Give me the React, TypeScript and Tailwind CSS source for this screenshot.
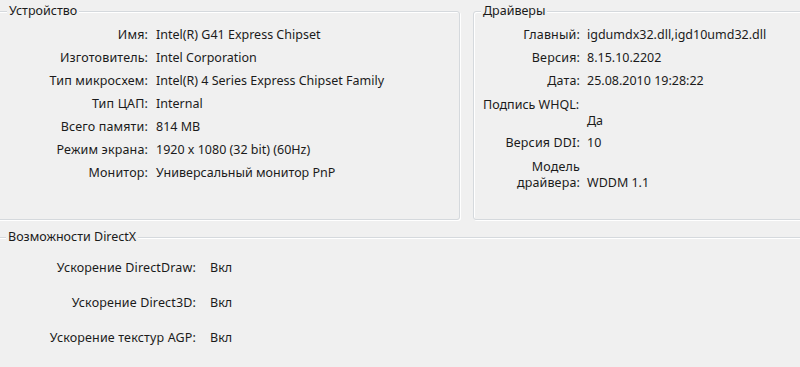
import React from 'react';

const deviceRows = [
  { label: 'Имя:', value: 'Intel(R) G41 Express Chipset' },
  { label: 'Изготовитель:', value: 'Intel Corporation' },
  { label: 'Тип микросхем:', value: 'Intel(R) 4 Series Express Chipset Family' },
  { label: 'Тип ЦАП:', value: 'Internal' },
  { label: 'Всего памяти:', value: '814 MB' },
  { label: 'Режим экрана:', value: '1920 x 1080 (32 bit) (60Hz)' },
  { label: 'Монитор:', value: 'Универсальный монитор PnP' },
];

const driverRows = [
  { label: 'Главный:', value: 'igdumdx32.dll,igd10umd32.dll' },
  { label: 'Версия:', value: '8.15.10.2202' },
  { label: 'Дата:', value: '25.08.2010 19:28:22' },
];

const dxRows = [
  { label: 'Ускорение DirectDraw:', value: 'Вкл' },
  { label: 'Ускорение Direct3D:', value: 'Вкл' },
  { label: 'Ускорение текстур AGP:', value: 'Вкл' },
];

const groupBox =
  'min-w-0 p-0 rounded-[3px] border border-[#d5d9dd] shadow-[inset_1px_1px_0_#ffffff,1px_1px_0_#ffffff]';
const legendCls = 'px-[2px] leading-[14px] bg-[#f0f0f0]';

export default function App() {
  return (
    <div
      className="w-[800px] h-[367px] overflow-hidden bg-[#f0f0f0] text-[12.5px] text-[#1b1b1b]"
      style={{ fontFamily: '"Noto Sans", "Open Sans", sans-serif' }}
    >
      <div className="flex gap-[13px]">
        {/* Устройство */}
        <fieldset className={`${groupBox} -ml-[4px] mt-[4px] w-[464px] h-[216px] shrink-0`}>
          <legend className={`${legendCls} ml-[10px]`}>Устройство</legend>
          <div className="grid grid-cols-[151px_1fr] gap-x-[8px] pt-[6px]">
            {deviceRows.map((r) => (
              <React.Fragment key={r.label}>
                <div className="h-[23px] flex items-center justify-end whitespace-nowrap tracking-[0.15px]">{r.label}</div>
                <div className="h-[23px] flex items-center whitespace-nowrap">{r.value}</div>
              </React.Fragment>
            ))}
          </div>
        </fieldset>

        {/* Драйверы */}
        <fieldset className={`${groupBox} -mr-[4px] mt-[4px] flex-1 h-[216px]`}>
          <legend className={`${legendCls} ml-[7px]`}>Драйверы</legend>
          <div className="pt-[6px]">
            {driverRows.map((r) => (
              <div key={r.label} className="h-[23px] flex items-center gap-x-[7px] whitespace-nowrap">
                <div className="w-[106px] text-right tracking-[0.15px]">{r.label}</div>
                <div>{r.value}</div>
              </div>
            ))}
            <div className="mt-[4px] leading-[16px] whitespace-nowrap">
              <div className="pl-[9px]">Подпись WHQL:</div>
              <div className="pl-[113px]">Да</div>
            </div>
            <div className="mt-[3px] h-[23px] flex items-center gap-x-[7px] whitespace-nowrap">
              <div className="w-[106px] text-right tracking-[0.15px]">Версия DDI:</div>
              <div>10</div>
            </div>
            <div className="mt-[4px] flex items-end gap-x-[7px] leading-[16px] whitespace-nowrap">
              <div className="w-[106px] text-right tracking-[0.15px]">
                <div>Модель</div>
                <div>драйвера:</div>
              </div>
              <div>WDDM 1.1</div>
            </div>
          </div>
        </fieldset>
      </div>

      {/* Возможности DirectX */}
      <fieldset className={`${groupBox} -mx-[4px] mt-[10px] h-[160px]`}>
        <legend className={`${legendCls} ml-[9px]`}>Возможности DirectX</legend>
        <div className="pt-[7px]">
          {dxRows.map((r) => (
            <div key={r.label} className="h-[35px] flex items-center gap-x-[14px] whitespace-nowrap">
              <div className="w-[199px] text-right tracking-[0.15px]">{r.label}</div>
              <div>{r.value}</div>
            </div>
          ))}
        </div>
      </fieldset>
    </div>
  );
}
